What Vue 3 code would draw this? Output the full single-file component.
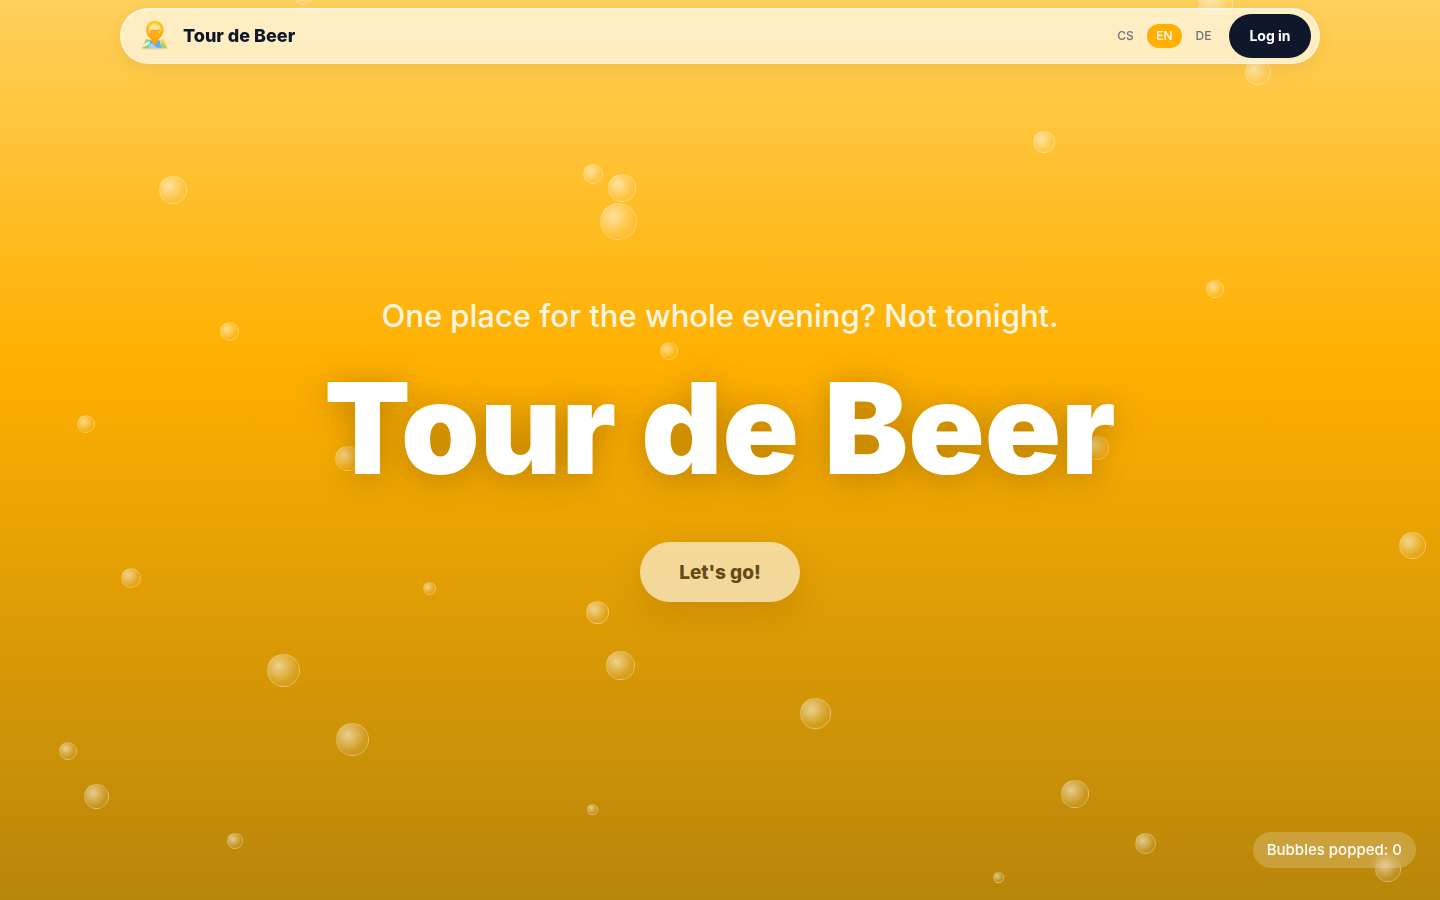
<script setup>
import { ref } from 'vue'

const languages = ['CS', 'EN', 'DE']
const language = ref('EN')
const popped = ref(0)

// x and y are the centre of each bubble on the canvas
const bubbles = ref([
  { x: 303, y: -4, d: 18 }, { x: 1215, y: 3, d: 35 }, { x: 1258, y: 72, d: 26 },
  { x: 1044, y: 142, d: 22 }, { x: 173, y: 190, d: 28 }, { x: 593, y: 174, d: 20 },
  { x: 622, y: 188, d: 28 }, { x: 618, y: 221, d: 37 }, { x: 1215, y: 289, d: 18 },
  { x: 229, y: 331, d: 19 }, { x: 669, y: 351, d: 18 }, { x: 86, y: 424, d: 18 },
  { x: 347, y: 458, d: 25 }, { x: 1097, y: 448, d: 24 }, { x: 1412, y: 545, d: 27 },
  { x: 131, y: 578, d: 20 }, { x: 429, y: 588, d: 13 }, { x: 597, y: 612, d: 23 },
  { x: 283, y: 670, d: 33 }, { x: 620, y: 665, d: 29 }, { x: 815, y: 713, d: 31 },
  { x: 352, y: 739, d: 33 }, { x: 68, y: 751, d: 18 }, { x: 96, y: 796, d: 25 },
  { x: 592, y: 809, d: 11 }, { x: 1075, y: 794, d: 28 }, { x: 235, y: 841, d: 16 },
  { x: 1145, y: 843, d: 21 }, { x: 998, y: 877, d: 11 }, { x: 1388, y: 869, d: 26 },
])

function bubbleStyle(b) {
  const half = Math.floor(b.d / 2)
  return { left: `${b.x - half}px`, top: `${b.y - half}px`, width: `${b.d}px`, height: `${b.d}px` }
}

function pop(b) {
  bubbles.value = bubbles.value.filter((other) => other !== b)
  popped.value += 1
}
</script>

<template>
  <div class="page">
    <div class="bubbles">
      <span v-for="b in bubbles" :key="`${b.x}-${b.y}`" class="bubble" :style="bubbleStyle(b)" @click="pop(b)"></span>
    </div>

    <header class="bar">
      <a class="brand" href="#">
        <svg class="logo" viewBox="0 0 32 32" aria-hidden="true">
          <defs>
            <linearGradient id="pin" x1="0" y1="0" x2="0" y2="1">
              <stop offset="0" stop-color="#fdcb22" />
              <stop offset="1" stop-color="#fd9a08" />
            </linearGradient>
          </defs>
          <ellipse cx="16" cy="28.500" rx="11.500" ry="1" fill="#cdbf98" opacity=".6" />
          <path d="M7 19 12 20 10 28 3 28.500z" fill="#9ccf72" />
          <path d="M5.500 23.500 11.500 21 11 24 3.500 27.500z" fill="#eef3cf" />
          <path d="M11.500 20 16 21 20.500 20 22.500 28 16 27.500 9.500 28z" fill="#5aacf0" />
          <path d="M10.500 24.500 13 23 18 28 9.500 28z" fill="#a2d5f5" />
          <path d="M20.500 20 25 19 29 28.500 22.500 28z" fill="#fbcf74" />
          <path d="M21.500 24 24 22.500 28 28.200 22.500 28z" fill="#a5cf80" />
          <path d="M15.800.8c-5 0-8.800 3.700-8.800 8.800 0 5.800 3.400 7.600 5.800 11.400 1.200 1.800 2 3.400 3 5.400 1-2 1.800-3.600 3-5.400 2.400-3.800 5.800-5.600 5.800-11.400 0-5.100-3.800-8.800-8.800-8.800z" fill="url(#pin)" />
          <circle cx="15.800" cy="9.400" r="6.200" fill="#ffdb75" />
          <path d="M11.300 9.500h7.900v5.700h-7.900z" fill="#fda51c" />
          <path d="M19 10.500h2v3.400h-2" fill="none" stroke="#fda51c" />
          <path d="M11.300 9.800c-.7-2 .6-3.400 1.800-3 1-1.500 3.700-1.300 4.200 0 1.700-.4 2.800 1.300 1.800 3z" fill="#ffeaa8" />
          <path d="M13.600 11v3M16.700 11v3" stroke="#ffbe42" stroke-width=".8" />
        </svg>
        <span class="name">Tour de Beer</span>
      </a>
      <nav class="actions">
        <button
          v-for="code in languages"
          :key="code"
          type="button"
          class="lang"
          :class="{ active: code === language }"
          @click="language = code"
        >{{ code }}</button>
        <button type="button" class="login">Log in</button>
      </nav>
    </header>

    <main class="hero">
      <p class="tagline">One place for the whole evening? Not tonight.</p>
      <h1 class="title">Tour de Beer</h1>
      <button type="button" class="go">Let's go!</button>
    </main>

    <div class="counter">Bubbles popped: {{ popped }}</div>
  </div>
</template>

<style>
body {
  margin: 0;
}
</style>

<style scoped>
.page {
  position: relative;
  display: flex;
  flex-direction: column;
  min-height: 100vh;
  overflow: hidden;
  box-sizing: border-box;
  padding: 8px 24px 0;
  font-family: Inter, "Open Sans", sans-serif;
  background: linear-gradient(180deg, #ffd05c 0%, #ffb000 40%, #b8860b 100%);
}

button {
  border: 0;
  font-family: inherit;
  cursor: pointer;
}

.bubbles {
  position: absolute;
  inset: 0;
}

.bubble {
  position: absolute;
  box-sizing: border-box;
  border: 1px solid rgba(255, 255, 255, 0.25);
  border-radius: 50%;
  background: radial-gradient(circle at 35% 35%, rgba(255, 255, 255, 0.55), rgba(255, 255, 255, 0.07) 65%);
}

.bar {
  position: relative;
  display: flex;
  align-items: center;
  justify-content: space-between;
  box-sizing: border-box;
  width: 100%;
  max-width: 1200px;
  height: 56px;
  margin: 0 auto;
  padding: 0 8px 0 18px;
  border: 1px solid rgba(255, 255, 255, 0.5);
  border-radius: 28px;
  background: rgba(255, 255, 255, 0.65);
  box-shadow: 0 4px 16px rgba(120, 80, 0, 0.1), inset 0 1px 0 rgba(255, 255, 255, 0.6);
  backdrop-filter: blur(12px);
}

.brand {
  display: flex;
  align-items: center;
  gap: 12px;
  color: #0f172a;
  text-decoration: none;
}

.logo {
  width: 32px;
  height: 32px;
}

.name {
  font-size: 18px;
  font-weight: 800;
  line-height: 28px;
}

.actions {
  display: flex;
  align-items: center;
  gap: 4px;
}

.lang {
  width: 35px;
  height: 24px;
  padding: 0 0 1px;
  border-radius: 12px;
  background: transparent;
  color: #6b7280;
  font-size: 12px;
  font-weight: 500;
}

.lang.active {
  background: #ffb000;
  color: #fff;
}

.login {
  width: 82px;
  height: 44px;
  margin-left: 4px;
  padding: 0 0 1px;
  border-radius: 22px;
  background: #0f172a;
  color: #fff;
  font-size: 14px;
  font-weight: 700;
}

.hero {
  display: flex;
  flex: 1;
  flex-direction: column;
  align-items: center;
  justify-content: center;
  padding-bottom: 66px;
  text-align: center;
  pointer-events: none;
}

.tagline {
  position: relative;
  margin: 0 0 28px;
  color: rgba(255, 255, 255, 0.9);
  font-size: 31px;
  font-weight: 500;
  line-height: 40px;
}

.title {
  position: relative;
  margin: 0 0 50px;
  color: #fff;
  font-size: 126px;
  font-weight: 900;
  line-height: 128px;
  text-shadow: 0 4px 32px rgba(120, 80, 0, 0.45);
}

.go {
  position: relative;
  width: 160px;
  height: 60px;
  padding: 0;
  border-radius: 30px;
  background: rgba(255, 255, 255, 0.6);
  color: #654b17;
  font-size: 19px;
  font-weight: 800;
  box-shadow: 0 12px 32px rgba(120, 80, 0, 0.2);
  pointer-events: auto;
}

.counter {
  position: absolute;
  right: 24px;
  bottom: 32px;
  height: 36px;
  padding: 0 14px;
  border-radius: 18px;
  background: rgba(255, 255, 255, 0.2);
  color: #fff;
  font-size: 15px;
  font-weight: 500;
  line-height: 36px;
  backdrop-filter: blur(4px);
}
</style>
